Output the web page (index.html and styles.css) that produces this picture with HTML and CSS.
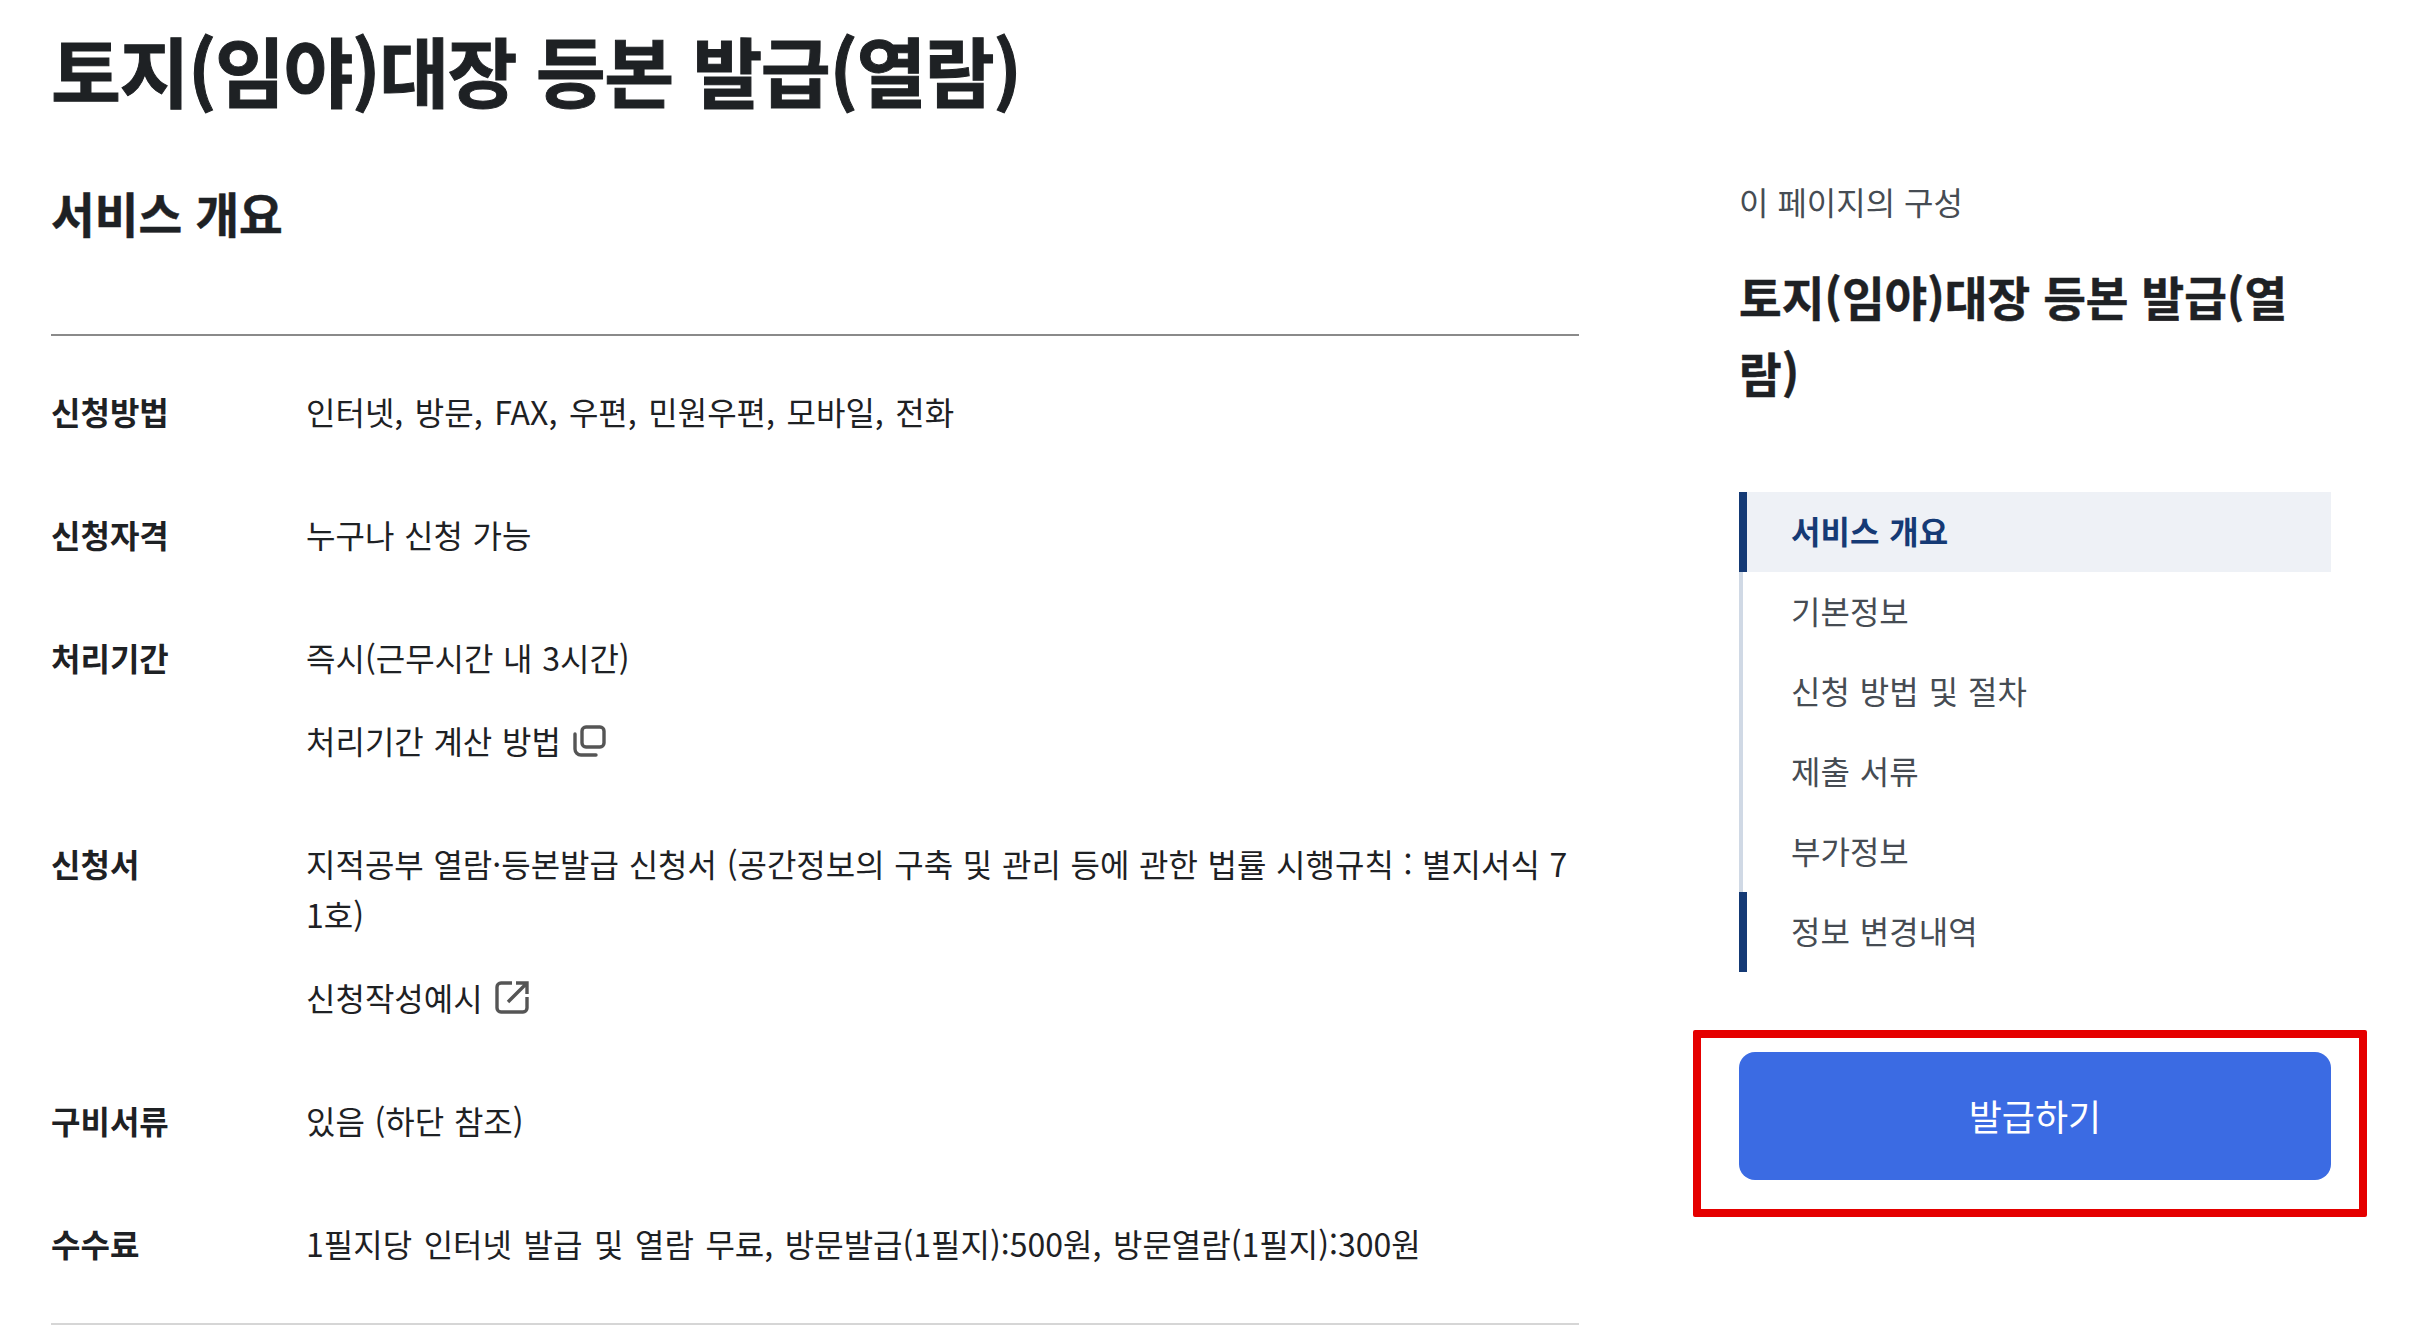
FILE: index.html
```html
<!DOCTYPE html>
<html lang="ko">
<head>
<meta charset="utf-8">
<title>토지(임야)대장 등본 발급(열람)</title>
<link rel="stylesheet" href="styles.css">
</head>
<body>
<div class="page">
  <h1 class="page-title">토지(임야)대장 등본 발급(열람)</h1>
  <div class="columns">
    <main class="main">
      <h2 class="section-title">서비스 개요</h2>
      <dl class="info">
        <div class="row wide"><dt>신청방법</dt><dd><p>인터넷, 방문, FAX, 우편, 민원우편, 모바일, 전화</p></dd></div>
        <div class="row"><dt>신청자격</dt><dd><p>누구나 신청 가능</p></dd></div>
        <div class="row"><dt>처리기간</dt><dd><p>즉시(근무시간 내 3시간)</p>
          <p class="sub">처리기간 계산 방법
            <svg class="icon copy" viewBox="0 0 36 36" fill="none" stroke="#555" stroke-width="3.4"><rect x="11" y="5" width="22" height="20" rx="4"/><path d="M4 12v15a6 6 0 0 0 6 6h15" stroke-linecap="round"/></svg>
          </p></dd></div>
        <div class="row"><dt>신청서</dt><dd><p>지적공부 열람·등본발급 신청서 (공간정보의 구축 및 관리 등에 관한 법률 시행규칙 : 별지서식 71호)</p>
          <p class="sub">신청작성예시
            <svg class="icon" viewBox="0 0 36 36" fill="none" stroke="#555" stroke-width="3.4"><path d="M18 4H7a4 4 0 0 0-4 4v21a4 4 0 0 0 4 4h22a4 4 0 0 0 4-4V18"/><path d="M14 23 32 5M22 4h11v11"/></svg>
          </p></dd></div>
        <div class="row"><dt>구비서류</dt><dd><p>있음 (하단 참조)</p></dd></div>
        <div class="row wide"><dt>수수료</dt><dd><p>1필지당 인터넷 발급 및 열람 무료, 방문발급(1필지):500원, 방문열람(1필지):300원</p></dd></div>
      </dl>
    </main>
    <aside class="side">
      <p class="side-label">이 페이지의 구성</p>
      <h2 class="side-title">토지(임야)대장 등본 발급(열람)</h2>
      <nav class="toc">
        <a class="toc-item active">서비스 개요</a>
        <a class="toc-item">기본정보</a>
        <a class="toc-item">신청 방법 및 절차</a>
        <a class="toc-item">제출 서류</a>
        <a class="toc-item">부가정보</a>
        <a class="toc-item marked">정보 변경내역</a>
      </nav>
      <div class="action">
        <button class="issue" type="button">발급하기</button>
        <span class="highlight"></span>
      </div>
    </aside>
  </div>
</div>
</body>
</html>
```
FILE: styles.css
```css
* { box-sizing: border-box; }
html, body { margin: 0; padding: 0; background: #fff; }
body {
  width: 2410px; height: 1344px; overflow: hidden;
  font-family: "Noto Sans CJK KR", "Noto Sans", sans-serif;
  color: #1e2124;
}
.page { padding: 19px 0 0 51px; }
.page-title {
  margin: 0; font-size: 76px; line-height: 100px; font-weight: 700;
  letter-spacing: -1.5px; color: #1e2124; -webkit-text-stroke: 1px #1e2124;
}
.columns { display: flex; gap: 160px; align-items: flex-start; }
.main { width: 1528px; }
.section-title {
  margin: 58px 0 0; height: 157px; font-size: 47.5px; line-height: 72px; font-weight: 700;
  -webkit-text-stroke: 0.5px #1e2124;
}
.info {
  margin: 0; padding: 49.5px 0 54px;
  border-top: 2px solid #8a8a8a; border-bottom: 2px solid #d6d6d6;
  display: flex; flex-direction: column; gap: 72px;
}
.row { display: flex; font-size: 32px; line-height: 51px; word-spacing: 0.7px; }
.row.wide { word-spacing: 2.6px; }
.row dt { width: 255px; flex: none; font-weight: 700; }
.row dd { margin: 0; flex: 1; word-break: break-all; }
.row p { margin: 0; }
.row .sub { margin-top: 32px; display: flex; align-items: center; gap: 11px; }
.icon { width: 36px; height: 36px; flex: none; }
.icon.copy { margin-left: -1px; }
.side { width: 592px; padding-top: 57px; }
.side-label { margin: 0; font-size: 32px; line-height: 51px; color: #464c53; }
.side-title {
  margin: 31px 0 0; font-size: 46.4px; line-height: 76px; font-weight: 700;
  -webkit-text-stroke: 0.5px #1e2124;
}
.toc { margin-top: 82px; display: flex; flex-direction: column; }
.toc-item {
  height: 80px; display: flex; align-items: center; padding: 0 0 5px 48px;
  font-size: 32px; color: #464c53; border-left: 4px solid #d0d9e5; word-spacing: 1px;
}
.toc-item.active {
  background: #eef1f6; color: #153a75; font-weight: 700;
  border-left: 8px solid #153a75; padding-left: 44px;
}
.toc-item.marked { border-left: 8px solid #153a75; padding-left: 44px; }
.action { position: relative; margin-top: 80px; }
.issue {
  display: block; width: 100%; height: 128px; border: 0; border-radius: 16px; padding: 0 0 3px;
  background: #3b6be3; color: #fff; font: 400 36px "Noto Sans CJK KR", sans-serif;
}
.highlight {
  position: absolute; left: -46px; right: -36px; top: -22px; bottom: -37px;
  border: 8px solid #e50000; border-radius: 2px; pointer-events: none;
}
```
